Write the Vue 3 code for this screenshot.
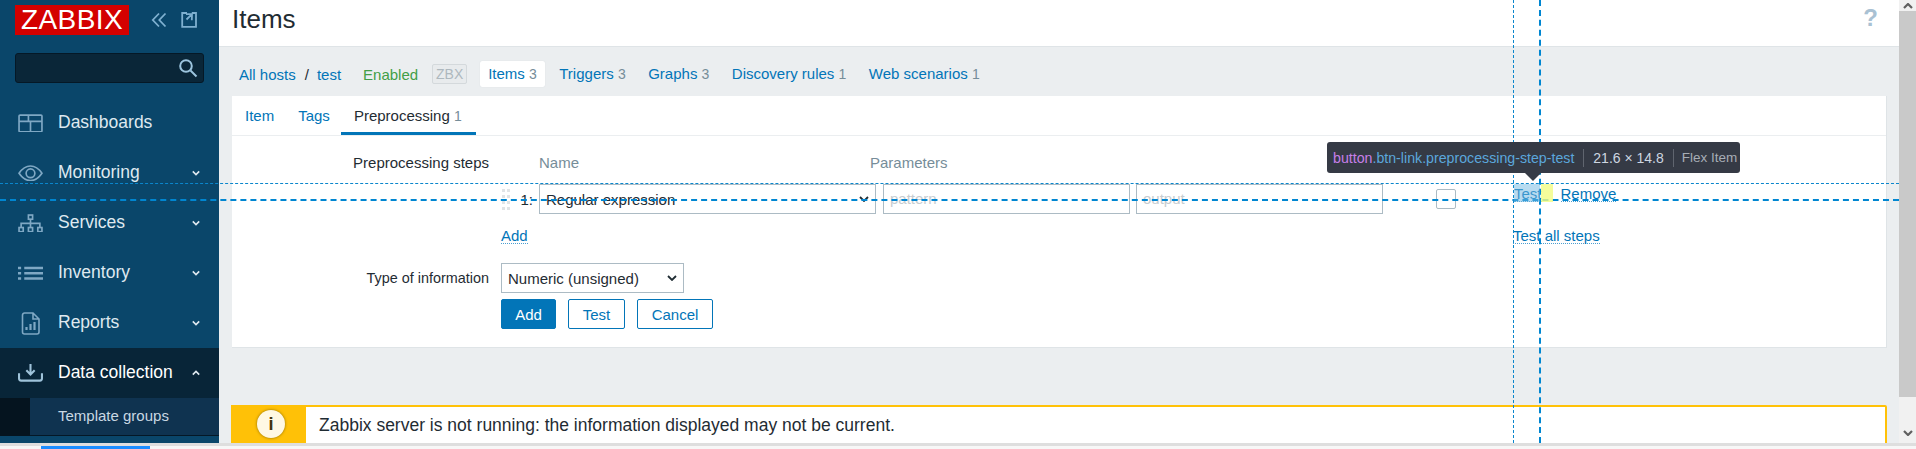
<template>
  <div class="screen">
    <div class="window">
      <aside class="sidebar">
        <div class="brand">
          <span class="logo">ZABBIX</span>
          <svg class="brand-icon collapse" viewBox="0 0 16 16"><path d="M8 1.500 1.800 8 8 14.500M14.500 1.500 8.300 8l6.200 6.500" /></svg>
          <svg class="brand-icon kiosk" viewBox="0 0 16 16"><path d="M6 1H1.200v13.800H15V1h-4.200M5 2l6 .2-.2 6M11 2.200 5.500 7.500" /></svg>
        </div>
        <div class="search">
          <svg viewBox="0 0 20 20"><circle cx="8" cy="8" r="5.800" /><path d="m12.500 12.500 6 6" /></svg>
        </div>
        <nav class="menu">
          <div v-for="m in menu" :key="m.name" class="menu-item" :class="{ active: m.open }">
            <span class="menu-icon" v-html="m.icon"></span>
            <span class="menu-name">{{ m.name }}</span>
            <svg v-if="m.arrow" class="chevron" viewBox="0 0 10 6"><path :d="m.open ? 'M1 5l4-4 4 4' : 'M1 1l4 4 4-4'" /></svg>
          </div>
          <div class="submenu">
            <div class="submenu-item">Template groups</div>
          </div>
        </nav>
      </aside>

      <main class="main">
        <header class="page-head">
          <h1>Items</h1>
          <span class="help">?</span>
        </header>

        <div class="content">
          <div class="host-nav">
            <a class="crumb">All hosts</a>
            <span class="sep">/</span>
            <a class="crumb">test</a>
            <span class="enabled">Enabled</span>
            <span class="zbx">ZBX</span>
            <span class="nav-tab current">Items <sup>3</sup></span>
            <a v-for="t in hostTabs" :key="t.name" class="nav-tab">{{ t.name }} <sup>{{ t.count }}</sup></a>
          </div>

          <section class="card">
            <div class="tabs">
              <a class="tab">Item</a>
              <a class="tab">Tags</a>
              <span class="tab selected">Preprocessing <sup>1</sup></span>
            </div>

            <div class="form">
              <div class="form-row steps-row">
                <label class="form-label">Preprocessing steps</label>
                <div class="steps">
                  <div class="steps-head">
                    <span class="col-name">Name</span>
                    <span>Parameters</span>
                  </div>
                  <div class="step">
                    <span class="handle"><i v-for="n in 8" :key="n"></i></span>
                    <span class="step-no">1:</span>
                    <div class="select step-select">
                      <span>Regular expression</span>
                      <svg viewBox="0 0 10 6"><path d="M1 1l4 4 4-4" /></svg>
                    </div>
                    <div class="input">pattern</div>
                    <div class="input">output</div>
                    <span class="check"></span>
                    <span class="step-actions">
                      <a class="dotted test-link">Test</a>
                      <a class="dotted">Remove</a>
                    </span>
                  </div>
                  <div class="steps-foot">
                    <span class="foot-left"><a class="dotted">Add</a></span>
                    <a class="dotted all-steps">Test all steps</a>
                  </div>
                </div>
              </div>

              <div class="form-row type-row">
                <label class="form-label">Type of information</label>
                <div class="select type-select">
                  <span>Numeric (unsigned)</span>
                  <svg viewBox="0 0 10 6"><path d="M1 1l4 4 4-4" /></svg>
                </div>
              </div>

              <div class="form-row">
                <span class="form-label"></span>
                <div class="buttons">
                  <button class="btn primary">Add</button>
                  <button class="btn test">Test</button>
                  <button class="btn cancel">Cancel</button>
                </div>
              </div>
            </div>
          </section>

          <div class="warning">
            <div class="warning-side"><span class="warning-icon">i</span></div>
            <div class="warning-text">Zabbix server is not running: the information displayed may not be current.</div>
          </div>
        </div>
      </main>

      <div class="scrollbar">
        <svg class="scroll-arrow up" viewBox="0 0 10 6"><path d="M1 5l4-4 4 4" /></svg>
        <div class="scroll-thumb"></div>
        <svg class="scroll-arrow" viewBox="0 0 10 6"><path d="M1 1l4 4 4-4" /></svg>
      </div>
    </div>

    <div class="bottom-bar"><span class="bottom-tab"></span></div>

    <!-- devtools inspect overlay -->
    <div class="guide h thin"></div>
    <div class="guide h thick"></div>
    <div class="guide v thin"></div>
    <div class="guide v thick"></div>
    <div class="hl-content"></div>
    <div class="hl-margin"></div>
    <div class="inspect-tip">
      <span class="tip-name"><span class="tag">button</span>.btn-link.preprocessing-step-test</span>
      <span class="tip-size">21.6 × 14.8</span>
      <span class="tip-kind">Flex Item</span>
    </div>
  </div>
</template>

<script setup>
const stroke = 'fill="none" stroke="#7fa8c4" stroke-width="1.6"'

const menu = [
  {
    name: 'Dashboards',
    icon: `<svg viewBox="0 0 24 18" ${stroke}><rect x="1" y="1" width="22" height="16" rx="1"/><path d="M1 7h22M12 7v10M10 1v6"/></svg>`
  },
  {
    name: 'Monitoring',
    arrow: true,
    icon: `<svg viewBox="0 0 24 16" ${stroke}><path d="M1 8c3-4.500 7-7 11-7s8 2.500 11 7c-3 4.500-7 7-11 7S4 12.500 1 8z"/><circle cx="12" cy="8" r="4.200"/></svg>`
  },
  {
    name: 'Services',
    arrow: true,
    icon: `<svg viewBox="0 0 24 18" ${stroke}><rect x="10" y="1" width="4" height="4"/><rect x="1" y="13" width="4" height="4"/><rect x="10" y="13" width="4" height="4"/><rect x="19" y="13" width="4" height="4"/><path d="M12 5v8M3 13v-4h18v4"/></svg>`
  },
  {
    name: 'Inventory',
    arrow: true,
    icon: `<svg viewBox="0 0 24 14" fill="none" stroke="#7fa8c4" stroke-width="2.400"><path d="M0 2h3M6 2h18M0 7h3M6 7h18M0 12h3M6 12h18"/></svg>`
  },
  {
    name: 'Reports',
    arrow: true,
    icon: `<svg viewBox="0 0 19 23" ${stroke}><path d="M1.500 3a2 2 0 0 1 2-2h8.500l6 6v13a2 2 0 0 1-2 2H3.500a2 2 0 0 1-2-2zM12 1v6h6"/><path stroke-width="2.200" d="M5.500 18v-3M9.500 18v-6M13.500 18v-8"/></svg>`
  },
  {
    name: 'Data collection',
    arrow: true,
    open: true,
    icon: `<svg viewBox="0 0 24 17" fill="none" stroke="#9fc3da" stroke-width="2"><path d="M12 0v9M8 6l4 4 4-4"/><path d="M1 9v5a2 2 0 0 0 2 2h18a2 2 0 0 0 2-2V9"/></svg>`
  }
]

const hostTabs = [
  { name: 'Triggers', count: 3 },
  { name: 'Graphs', count: 3 },
  { name: 'Discovery rules', count: 1 },
  { name: 'Web scenarios', count: 1 }
]
</script>

<style>
html, body { margin: 0; height: 100%; overflow: hidden; background: #ebeef0; }
</style>

<style scoped>
.screen {
  position: relative;
  width: 1916px;
  height: 449px;
  overflow: hidden;
  font-family: "Liberation Sans", Arial, sans-serif;
  font-size: 15px;
  color: #1f2c33;
}
.window { display: flex; height: 443px; overflow: hidden; }

/* sidebar */
.sidebar { width: 219px; flex: none; background: #0a466a; }
.brand { display: flex; align-items: center; height: 40px; padding-left: 15px; }
.logo {
  width: 114px;
  height: 30px;
  margin-top: -1px;
  background: #d40000;
  color: #fff;
  font-size: 28px;
  line-height: 30px;
  text-align: center;
  letter-spacing: 0.400px;
}
.brand-icon { width: 16px; height: 16px; fill: none; stroke: #7fb0d0; stroke-width: 1.800; }
.collapse { margin-left: 22px; }
.kiosk { margin-left: 14px; }
.search {
  display: flex;
  align-items: center;
  justify-content: flex-end;
  box-sizing: border-box;
  width: 189px;
  height: 30px;
  margin: 13px 0 0 15px;
  padding-right: 5px;
  background: #0a2638;
  border: 1px solid #051826;
  border-radius: 3px;
}
.search svg { width: 20px; height: 20px; fill: none; stroke: #9cc4de; stroke-width: 2; }
.menu { margin-top: 15px; }
.menu-item { display: flex; align-items: center; height: 50px; padding-left: 18px; color: #dfe9f0; font-size: 17.500px; }
.menu-item.active { background: #082538; color: #fff; }
.menu-icon { display: flex; justify-content: center; width: 25px; margin-right: 15px; }
.menu-icon :deep(svg) { width: 25px; max-height: 23px; }
.menu-name { flex: 1; margin-top: -2px; }
.chevron { width: 8px; height: 6px; margin-right: 19px; fill: none; stroke: #dfe9f0; stroke-width: 2; }
.submenu { background: #05141f; padding-left: 30px; }
.submenu-item {
  height: 37px;
  padding-left: 28px;
  background: #0f3350;
  border-bottom: 1px solid #051826;
  color: #c9d8e3;
  font-size: 15px;
  line-height: 35px;
}

/* main column */
.main { flex: 1; min-width: 0; }
.page-head {
  display: flex;
  align-items: center;
  justify-content: space-between;
  box-sizing: border-box;
  height: 47px;
  padding: 0 21px 0 13px;
  background: #fff;
  border-bottom: 1px solid #dfe4e7;
}
h1 { margin: -8px 0 0; font-size: 26px; font-weight: 400; line-height: 36px; }
.help { font-size: 24px; color: #a9c1d3; font-weight: 700; margin-top: -10px; }
.content { padding: 14px 12px 0 13px; }

.host-nav { display: flex; align-items: center; height: 26px; padding-left: 7px; }
a { color: #0275b8; }
.sep { margin: 0 8px 0 9px; color: #1f2c33; }
.enabled { margin: 0 14px 0 22px; color: #429e47; }
.zbx {
  box-sizing: border-box;
  width: 35px;
  height: 20px;
  margin-right: 13px;
  border: 1px solid #d4d9dc;
  border-radius: 2px;
  background: #e8ebed;
  color: #aeb8be;
  font-size: 14px;
  line-height: 18px;
  text-align: center;
}
.nav-tab { height: 26px; padding: 0 8px; margin-right: 6.500px; line-height: 26px; white-space: nowrap; }
.nav-tab.current { background: #fff; border-radius: 2px; color: #0275b8; box-shadow: 0 0 1px #c9d1d6; }
sup { vertical-align: baseline; font-size: 14px; color: #768d99; }

.card {
  box-sizing: border-box;
  height: 252px;
  margin-top: 9px;
  background: #fff;
  border-bottom: 1px solid #dfe4e7;
  border-right: 1px solid #dfe4e7;
}
.tabs { display: flex; height: 39px; padding-left: 1px; border-bottom: 1px solid #ebeef0; }
.tab { height: 36px; padding: 0 12px; line-height: 39px; color: #0275b8; }
.tab.selected { padding: 0 14px 0 13px; margin-left: -1px; color: #1f2c33; border-bottom: 3px solid #0275b8; }

.form { padding-top: 16px; }
.form-row { display: flex; }
.form-label { flex: none; width: 257px; margin-right: 12px; text-align: right; }
.steps-row .form-label { line-height: 22px; }
.type-row .form-label { font-size: 14.400px; }
.steps { flex: 1; }
.steps-head { display: flex; height: 22px; padding-left: 38px; line-height: 22px; color: #768d99; }
.col-name { width: 331px; }
.step { display: flex; align-items: center; height: 30px; margin-top: 10px; }
.handle { display: grid; grid-template-columns: 3px 3px; gap: 3px 2px; width: 8px; margin-left: 1px; }
.handle i { height: 3px; background: #e1e4e6; }
.step-no { flex: none; box-sizing: border-box; width: 29px; padding-right: 6px; text-align: right; }
.select {
  display: flex;
  align-items: center;
  justify-content: space-between;
  box-sizing: border-box;
  height: 30px;
  padding: 0 6px;
  border: 1px solid #acbbc4;
  background: #fff;
}
.select svg { width: 10px; height: 6px; fill: none; stroke: #1f2c33; stroke-width: 1.800; }
.step-select { flex: none; width: 337px; }
.input {
  flex: none;
  box-sizing: border-box;
  width: 247px;
  height: 30px;
  margin-left: 6px;
  padding: 0 6px;
  border: 1px solid #acbbc4;
  color: #c6ccd0;
  line-height: 28px;
}
.step-select + .input { margin-left: 7px; }
.check {
  flex: none;
  box-sizing: border-box;
  width: 20px;
  height: 20px;
  margin-left: 53px;
  border: 1px solid #acbbc4;
  border-radius: 2px;
}
.step-actions { display: flex; align-self: flex-start; gap: 19px; margin: 2px 0 0 58px; }
.dotted { border-bottom: 1px dotted #4d9fd0; line-height: 15px; }
.steps-foot { display: flex; align-items: flex-start; height: 20px; margin-top: 14px; }
.foot-left { display: flex; width: 1012px; }
.all-steps { white-space: nowrap; }
.type-row { align-items: center; margin-top: 15px; }
.type-select { width: 183px; }
.buttons { display: flex; gap: 12px; margin-top: 6px; }
.btn {
  box-sizing: border-box;
  height: 30px;
  border: 1px solid #0275b8;
  border-radius: 2px;
  background: #fff;
  color: #0275b8;
  font: inherit;
  padding: 0;
}
.btn.primary { width: 55px; background: #0275b8; color: #fff; }
.btn.test { width: 57px; }
.btn.cancel { width: 76px; }

.warning {
  display: flex;
  box-sizing: border-box;
  height: 60px;
  margin: 57px 0 0 -1px;
  border: 2px solid #ffc107;
  border-radius: 2px;
  background: #fff;
}
.warning-side {
  display: flex;
  justify-content: center;
  box-sizing: border-box;
  width: 75px;
  margin: -2px 0 -2px -2px;
  padding: 5px 0 0 5px;
  background: #ffc107;
}
.warning-icon {
  width: 28px;
  height: 28px;
  border-radius: 50%;
  background: #fff8e3;
  box-shadow: 0 0 3px #8a6a00;
  color: #43330a;
  font-size: 18px;
  font-weight: 700;
  line-height: 29px;
  text-align: center;
}
.warning-text { padding: 7px 0 0 13px; font-size: 17.500px; line-height: 22px; }

/* scrollbar */
.scrollbar { display: flex; flex-direction: column; flex: none; width: 17px; background: #f1f1f1; }
.scroll-thumb { height: 386px; background: #c9c9c9; }
.scroll-arrow { width: 10px; height: 6px; margin: 33px auto 0; fill: none; stroke: #606060; stroke-width: 2.200; }
.scroll-arrow.up { margin: 3px auto 2px; }
.bottom-bar { height: 6px; background: #f7f7f7; border-top: 3px solid #dedede; box-sizing: border-box; }
.bottom-tab { display: block; width: 109px; height: 3px; margin-left: 41px; background: #1a8cff; }

/* devtools overlay */
.guide { position: absolute; }
.guide.h { left: 0; width: 1899px; }
.guide.v { top: 0; height: 443px; }
.guide.h.thin { top: 183px; border-top: 1px dashed #0a86cc; }
.guide.h.thick { top: 199px; border-top: 2px dashed #0086d1; }
.guide.v.thin { left: 1513px; border-left: 1px dashed #0a86cc; }
.guide.v.thick { left: 1539px; border-left: 2px dashed #0086d1; }
.hl-content { position: absolute; left: 1514px; top: 184px; width: 26px; height: 18px; background: rgba(111, 184, 226, 0.5); }
.hl-margin { position: absolute; left: 1541px; top: 184px; width: 12px; height: 18px; background: rgba(243, 252, 130, 0.8); }
.inspect-tip {
  position: absolute;
  left: 1327px;
  top: 142px;
  display: flex;
  align-items: center;
  box-sizing: border-box;
  width: 413px;
  height: 31px;
  padding: 0 6px;
  background: #353a45;
  border-radius: 3px;
  font-size: 14px;
  white-space: nowrap;
}
.inspect-tip::after {
  content: "";
  position: absolute;
  left: 198px;
  top: 31px;
  border: 8px solid transparent;
  border-top-color: #353a45;
  border-bottom: 0;
}
.tip-name { padding-right: 9px; color: #5ba7dc; font-size: 14.200px; }
.tag { color: #c77fe8; }
.tip-size { padding: 0 9px; color: #cdd6e0; border-left: 1px solid #60656f; line-height: 18px; }
.tip-kind { padding-left: 8px; color: #a7adb5; border-left: 1px solid #60656f; line-height: 18px; font-size: 13.500px; }
</style>
